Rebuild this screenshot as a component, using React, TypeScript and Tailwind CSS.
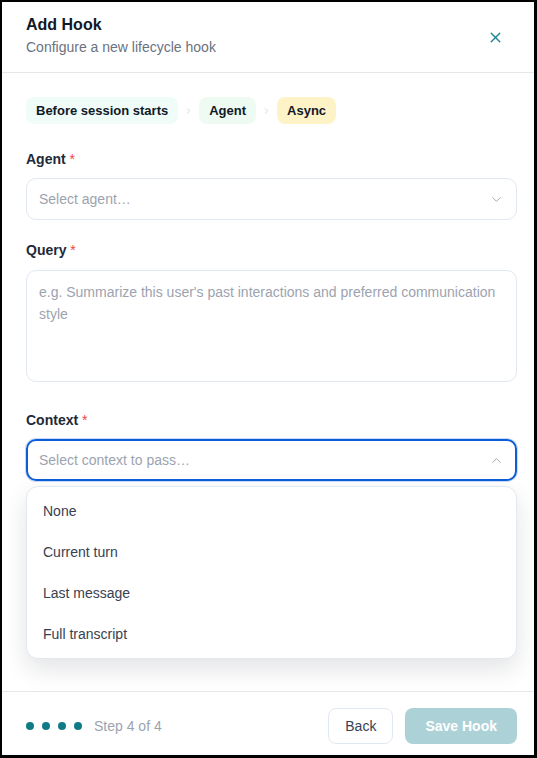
import React from 'react';
import { X, ChevronDown, ChevronUp, ChevronRight } from 'lucide-react';

const Label = ({ text, className = '' }: { text: string; className?: string }) => (
  <label className={`block text-sm leading-5 font-bold text-[#1f2937] ${className}`}>
    {text} <span className="text-[#ef4444] font-normal">*</span>
  </label>
);

const options = ['None', 'Current turn', 'Last message', 'Full transcript'];

const App = () => {
  return (
    <section
      className="w-[537px] h-[758px] bg-black pt-[2px] pl-[2px]"
      style={{ fontFamily: '"Liberation Sans", Arial, sans-serif' }}
    >
      <div className="w-[532px] h-[753px] bg-white flex flex-col">
        {/* header */}
        <div className="flex justify-between items-center pl-6 pr-[17px] pt-[11px] pb-[15px] border-b border-[#e5e7eb]">
          <div>
            <h1 className="text-base leading-6 font-bold text-[#111827]">Add Hook</h1>
            <p className="text-sm leading-5 text-[#6b7280]">Configure a new lifecycle hook</p>
          </div>
          <button className="w-7 h-7 mr-2 mt-1 flex items-center justify-center text-[#1b8792]">
            <X size={17} strokeWidth={1.9} />
          </button>
        </div>

        {/* body */}
        <div className="flex-1 pl-6 pr-[17px] pt-6">
          <div className="flex items-center gap-1.5">
            <span className="px-2.5 py-1 text-[13px] leading-[19px] font-bold text-[#111827] bg-[#effcf8] rounded-lg">
              Before session starts
            </span>
            <span className="w-[9px] flex justify-center text-[#b0b7c3]">
              <ChevronRight size={10} strokeWidth={1.5} />
            </span>
            <span className="px-2.5 py-1 text-[13px] leading-[19px] font-bold text-[#111827] bg-[#edfbf3] rounded-lg">
              Agent
            </span>
            <span className="w-[9px] flex justify-center text-[#b0b7c3]">
              <ChevronRight size={10} strokeWidth={1.5} />
            </span>
            <span className="px-2.5 py-1 text-[13px] leading-[19px] font-bold text-[#111827] bg-[#fef3c7] rounded-lg">
              Async
            </span>
          </div>

          <Label text="Agent" className="mt-[25px]" />
          <div className="mt-[9px] h-[42px] border border-[#e2e8f0] rounded-[10px] px-3 flex items-center justify-between">
            <span className="text-sm text-[#9ca3af]">Select agent…</span>
            <ChevronDown size={15} strokeWidth={1.5} className="text-[#9ca3af]" />
          </div>

          <Label text="Query" className="mt-5" />
          <div className="mt-[10px] h-[112px] border border-[#e2e8f0] rounded-[10px] px-3 pt-[10px]">
            <p className="text-sm leading-[22px] text-[#9ca3af]">
              e.g. Summarize this user's past interactions and preferred communication style
            </p>
          </div>

          <Label text="Context" className="mt-[28px]" />
          <div className="relative mt-[9px]">
            <div className="h-[42px] border-2 border-[#0b5ed7] ring-1 ring-[#c7dbf7] rounded-[10px] px-[11px] flex items-center justify-between">
              <span className="text-sm text-[#9ca3af]">Select context to pass…</span>
              <ChevronUp size={15} strokeWidth={1.5} className="text-[#9ca3af]" />
            </div>
            <ul className="absolute left-0 right-0 top-[47px] bg-white border border-[#e2e8f0] rounded-xl pt-[3px] px-1 pb-1 shadow-[0_10px_24px_rgba(15,23,42,0.12)]">
              {options.map((o) => (
                <li key={o} className="h-[41px] px-3 flex items-center text-sm text-[#374151]">
                  {o}
                </li>
              ))}
            </ul>
          </div>
        </div>

        {/* footer */}
        <div className="flex items-center justify-between pl-6 pr-[17px] pt-4 pb-[11px] border-t border-[#e5e7eb]">
          <div className="flex items-center">
            <div className="flex gap-2">
              <span className="w-2 h-2 rounded-full bg-[#0f7b84]"></span>
              <span className="w-2 h-2 rounded-full bg-[#0f7b84]"></span>
              <span className="w-2 h-2 rounded-full bg-[#0f7b84]"></span>
              <span className="w-2 h-2 rounded-full bg-[#0f7b84]"></span>
            </div>
            <span className="ml-3 text-sm text-[#9ca3af]">Step 4 of 4</span>
          </div>
          <div className="flex gap-3">
            <button className="h-9 px-4 border border-[#e2e8f0] rounded-lg text-sm text-[#374151] bg-white">
              Back
            </button>
            <button className="h-9 px-5 rounded-lg text-sm font-bold text-white bg-[#acd1d6]">
              Save Hook
            </button>
          </div>
        </div>
      </div>
    </section>
  );
};

export default App;
